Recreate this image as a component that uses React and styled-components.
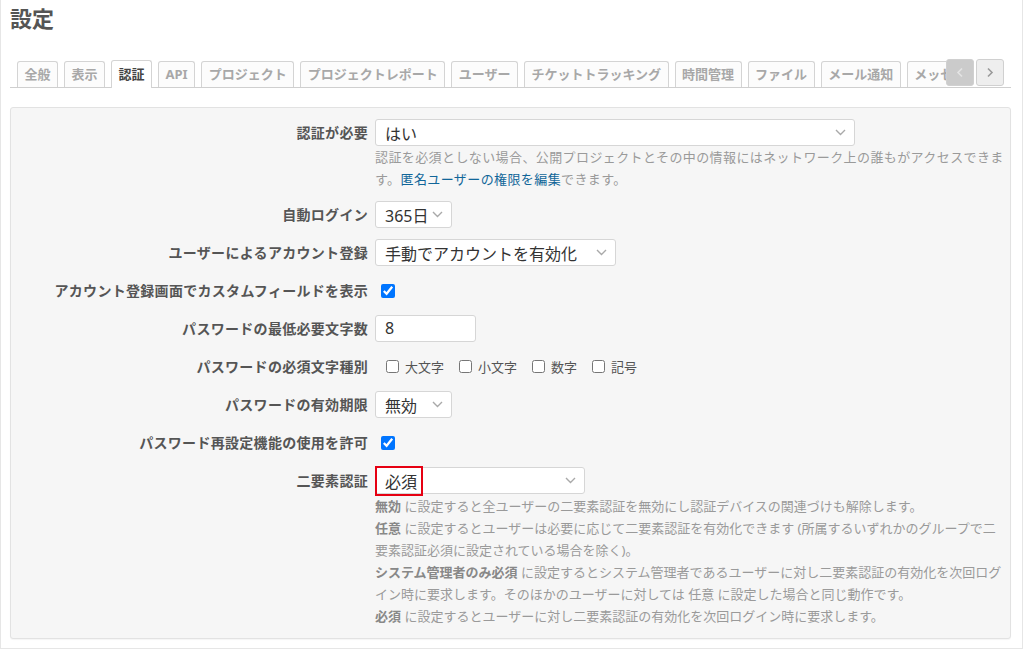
import React from "react";
import styled, { createGlobalStyle } from "styled-components";

const Global = createGlobalStyle`
  html, body { margin: 0; padding: 0; background: #fff; }
  body { font-family: "Noto Sans", "Noto Sans CJK JP", sans-serif; color: #555; }
`;

const Frame = styled.div`
  width: 1023px;
  height: 649px;
  box-sizing: border-box;
  border: 1px solid #e6e6e6;
  border-top: none;
  padding: 4px 11px 0 9px;
  background: #fff;
  overflow: hidden;
`;

const Title = styled.h2`
  margin: 0;
  font-size: 22px;
  line-height: 28px;
  font-weight: bold;
  color: #555;
`;

const TabBar = styled.div`
  display: flex;
  align-items: flex-end;
  margin-top: 27px;
  height: 28px;
  border-bottom: 1px solid #cfcfcf;
`;

const TabList = styled.ul`
  flex: 1;
  display: flex;
  align-items: flex-end;
  gap: 6px;
  list-style: none;
  margin: 0 0 -1px 0;
  padding: 0 0 0 7px;
  height: 29px;
  overflow: hidden;
`;

const Tab = styled.li`
  flex-shrink: 0;
  box-sizing: border-box;
  height: ${(p) => (p.$active ? "28px" : "26px")};
  margin-bottom: ${(p) => (p.$active ? "0" : "1px")};
  padding: 0 6.5px;
  border: 1px solid #d4d4d4;
  border-bottom: none;
  border-radius: 3px 3px 0 0;
  background: ${(p) => (p.$active ? "#fff" : "#fcfcfc")};
  color: ${(p) => (p.$active ? "#444" : "#a8a8a8")};
  font-size: 13px;
  font-weight: bold;
  line-height: ${(p) => (p.$active ? "27px" : "24px")};
  white-space: nowrap;
`;

const ScrollButtons = styled.div`
  display: flex;
  gap: 2px;
  margin: 0 7px 1px 0;
`;

const ScrollButton = styled.div`
  width: 28px;
  height: 27px;
  box-sizing: border-box;
  border: 1px solid #d0d0d0;
  border-radius: 3px;
  background: ${(p) => (p.$disabled ? "#cbcbcb" : "#eeeeee")};
  display: flex;
  align-items: center;
  justify-content: center;
`;

const Panel = styled.div`
  margin-top: 19px;
  background: #f6f6f6;
  border: 1px solid #e2e2e2;
  border-radius: 3px;
  box-shadow: 0 1px 1px rgba(0, 0, 0, 0.04);
  padding: 11px 0 11px 0;
`;

const Row = styled.div`
  display: grid;
  grid-template-columns: 357px 1fr;
  column-gap: 7px;
  align-items: center;
  margin-bottom: ${(p) => (p.$last ? "0" : "11px")};
`;

const Label = styled.label`
  text-align: right;
  font-size: 14px;
  font-weight: bold;
  letter-spacing: 0.3px;
  color: #555;
  line-height: 27px;
  white-space: nowrap;
`;

const Control = styled.div`
  display: flex;
  align-items: center;
  min-height: 27px;
`;

const SelectBox = styled.div`
  position: relative;
  width: ${(p) => p.$w}px;
  height: 27px;
  box-sizing: border-box;
  border: 1px solid #d6d6d6;
  border-radius: 3px;
  background: #fff;
  display: flex;
  align-items: center;
  justify-content: space-between;
  gap: 4px;
  padding: 0 8px 0 9px;
  font-size: 16px;
  color: #333;
  white-space: nowrap;
  svg { flex-shrink: 0; }
`;

const TextInput = styled.div`
  width: ${(p) => p.$w}px;
  height: 27px;
  box-sizing: border-box;
  border: 1px solid #d6d6d6;
  border-radius: 3px;
  background: #fff;
  padding: 0 9px;
  font-size: 16px;
  line-height: 25px;
  color: #333;
`;

const Check = styled.input.attrs({ type: "checkbox" })`
  width: 14px;
  height: 14px;
  margin: 0 0 0 ${(p) => p.$ml || 0}px;
  accent-color: #0075ff;
`;

const CheckGroup = styled.div`
  display: flex;
  align-items: center;
  gap: 15px;
  margin-left: 11px;
`;

const CheckItem = styled.span`
  display: flex;
  align-items: center;
  gap: 6px;
  font-size: 13px;
  color: #555;
  input { margin: 0; width: 13px; height: 13px; }
`;

const Hint = styled.div`
  grid-column: 2;
  font-size: 13px;
  line-height: 22px;
  letter-spacing: ${(p) => p.$ls || 0}px;
  color: #9a9a9a;
  margin-top: ${(p) => p.$mt || 0}px;
  white-space: nowrap;
  b { color: #888; font-weight: bold; }
  a { color: #169; text-decoration: none; }
`;

const Highlight = styled.span`
  position: absolute;
  left: -1px;
  top: -2px;
  width: 48px;
  height: 30px;
  box-sizing: border-box;
  border: 2px solid #e60012;
  pointer-events: none;
`;

const Chevron = () => (
  <svg width="11" height="7" viewBox="0 0 11 7">
    <polyline points="1,1 5.5,5.5 10,1" fill="none" stroke="#a9a9a9" strokeWidth="1.4" />
  </svg>
);

const Arrow = ({ dir, color }) => (
  <svg width="8" height="11" viewBox="0 0 8 11">
    <polyline
      points={dir === "left" ? "6,1.5 2,5.5 6,9.5" : "2,1.5 6,5.5 2,9.5"}
      fill="none"
      stroke={color}
      strokeWidth="1.6"
    />
  </svg>
);

const Select = ({ w, value, highlight }) => (
  <SelectBox $w={w}>
    <span>{value}</span>
    <Chevron />
    {highlight && <Highlight />}
  </SelectBox>
);

const tabs = [
  "全般",
  "表示",
  "認証",
  "API",
  "プロジェクト",
  "プロジェクトレポート",
  "ユーザー",
  "チケットトラッキング",
  "時間管理",
  "ファイル",
  "メール通知",
  "メッセージ",
  "リポジトリ",
];

export default function App() {
  return (
    <>
      <Global />
      <Frame>
        <Title>設定</Title>
        <TabBar>
          <TabList>
            {tabs.map((t) => (
              <Tab key={t} $active={t === "認証"}>
                {t}
              </Tab>
            ))}
          </TabList>
          <ScrollButtons>
            <ScrollButton $disabled>
              <Arrow dir="left" color="#e4e4e4" />
            </ScrollButton>
            <ScrollButton>
              <Arrow dir="right" color="#9a9a9a" />
            </ScrollButton>
          </ScrollButtons>
        </TabBar>

        <Panel>
          <Row>
            <Label>認証が必要</Label>
            <Control>
              <Select w={480} value="はい" />
            </Control>
            <Hint $ls={0.4}>
              認証を必須としない場合、公開プロジェクトとその中の情報にはネットワーク上の誰もがアクセスできま
              <br />
              す。<a href="#">匿名ユーザーの権限を編集</a>できます。
            </Hint>
          </Row>
          <Row>
            <Label>自動ログイン</Label>
            <Control>
              <Select w={77} value="365日" />
            </Control>
          </Row>
          <Row>
            <Label>ユーザーによるアカウント登録</Label>
            <Control>
              <Select w={241} value="手動でアカウントを有効化" />
            </Control>
          </Row>
          <Row>
            <Label>アカウント登録画面でカスタムフィールドを表示</Label>
            <Control>
              <Check $ml={6} defaultChecked />
            </Control>
          </Row>
          <Row>
            <Label>パスワードの最低必要文字数</Label>
            <Control>
              <TextInput $w={101}>8</TextInput>
            </Control>
          </Row>
          <Row>
            <Label>パスワードの必須文字種別</Label>
            <Control>
              <CheckGroup>
                <CheckItem>
                  <Check />
                  大文字
                </CheckItem>
                <CheckItem>
                  <Check />
                  小文字
                </CheckItem>
                <CheckItem>
                  <Check />
                  数字
                </CheckItem>
                <CheckItem>
                  <Check />
                  記号
                </CheckItem>
              </CheckGroup>
            </Control>
          </Row>
          <Row>
            <Label>パスワードの有効期限</Label>
            <Control>
              <Select w={77} value="無効" />
            </Control>
          </Row>
          <Row>
            <Label>パスワード再設定機能の使用を許可</Label>
            <Control>
              <Check $ml={6} defaultChecked />
            </Control>
          </Row>
          <Row $last>
            <Label>二要素認証</Label>
            <Control>
              <Select w={210} value="必須" highlight />
            </Control>
            <Hint $mt={1}>
              <b>無効</b> に設定すると全ユーザーの二要素認証を無効にし認証デバイスの関連づけも解除します。
              <br />
              <b>任意</b> に設定するとユーザーは必要に応じて二要素認証を有効化できます (所属するいずれかのグループで二
              <br />
              要素認証必須に設定されている場合を除く)。
              <br />
              <b>システム管理者のみ必須</b> に設定するとシステム管理者であるユーザーに対し二要素認証の有効化を次回ログ
              <br />
              イン時に要求します。そのほかのユーザーに対しては 任意 に設定した場合と同じ動作です。
              <br />
              <b>必須</b> に設定するとユーザーに対し二要素認証の有効化を次回ログイン時に要求します。
            </Hint>
          </Row>
        </Panel>
      </Frame>
    </>
  );
}
